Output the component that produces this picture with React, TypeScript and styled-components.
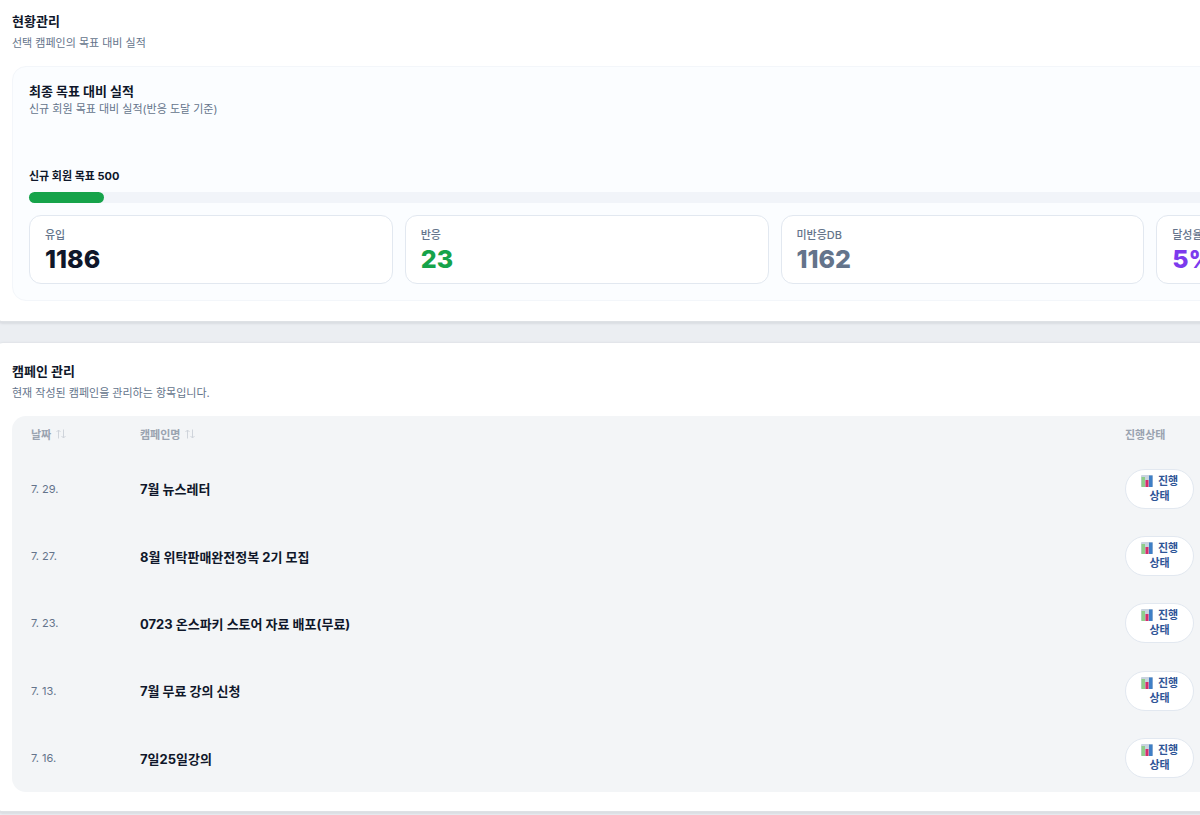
import React from "react";
import styled, { createGlobalStyle } from "styled-components";

const GlobalStyle = createGlobalStyle`
  * { box-sizing: border-box; }
  body {
    margin: 0;
    background: #ebeef2;
    color: #0f172a;
    font-family: Inter, "Noto Sans CJK KR", sans-serif;
    font-size: 12px;
    word-break: keep-all;
  }
  h1, h2, h3, p, dl, dt, dd { margin: 0; }
`;

const Viewport = styled.main`
  overflow: hidden;
  min-height: 100vh;
`;

const Board = styled.div`
  display: flex;
  flex-direction: column;
  gap: 22px;
  margin: 0 -354px 0 -5px;
`;

const Section = styled.section<{ $first?: boolean }>`
  padding: ${(p) => (p.$first ? "11px 17px 20px" : "18px 17px 19px")};
  background: #fff;
  border-radius: ${(p) => (p.$first ? "0 0 8px 8px" : "8px")};
  box-shadow: 0 0 2px 1px #e0e3e7, 0 2px 2px 1px #d9dce1;
`;

const SectionTitle = styled.h2`
  font-size: 13px;
  line-height: 20px;
  font-weight: 700;
`;

const Description = styled.p`
  margin-top: 2px;
  font-size: 11px;
  line-height: 20px;
  color: #64748b;
`;

const Panel = styled.div`
  margin-top: 13px;
  padding: 15px 16px 16px;
  background: #fbfdff;
  border: 1px solid #f3f6fa;
  border-radius: 14px;
`;

const PanelTitle = styled.h3`
  font-size: 13px;
  line-height: 18px;
  font-weight: 700;
`;

const PanelText = styled.p`
  font-size: 11px;
  line-height: 18px;
  color: #64748b;
`;

const GoalLabel = styled.p`
  margin-top: 48px;
  font-size: 11px;
  line-height: 20px;
  font-weight: 700;
`;

const Track = styled.div`
  height: 11px;
  margin: 6px 0 12px;
  border-radius: 6px;
  background: #f1f4f9;
`;

const Fill = styled.div`
  height: 100%;
  border-radius: 6px;
  background: #16a34a;
`;

const Stats = styled.dl`
  display: grid;
  grid-template-columns: repeat(4, 1fr);
  gap: 12px;
`;

const Stat = styled.div`
  padding: 9px 15px 10px;
  background: #fff;
  border: 1px solid #e2e8f0;
  border-radius: 12px;
`;

const StatLabel = styled.dt`
  font-size: 11px;
  line-height: 20px;
  font-weight: 500;
  color: #64748b;
`;

const StatValue = styled.dd<{ $color: string }>`
  font-size: 25px;
  line-height: 28px;
  font-weight: 800;
  color: ${(p) => p.$color};
`;

const TableBox = styled.div`
  margin-top: 13px;
  padding-left: 19px;
  background: #f3f5f7;
  border-radius: 14px;
`;

const Table = styled.table`
  width: 100%;
  height: 376px;
  table-layout: fixed;
  border-collapse: collapse;
`;

const HeadCell = styled.th<{ $width?: number }>`
  width: ${(p) => (p.$width ? `${p.$width}px` : "auto")};
  height: 39px;
  padding: 0 0 3px;
  text-align: left;
  font-size: 11px;
  font-weight: 700;
  color: #9aa3b0;
`;

const SortButton = styled.button`
  display: flex;
  align-items: center;
  gap: 5px;
  padding: 0;
  border: 0;
  background: none;
  font: inherit;
  color: inherit;
`;

const DateCell = styled.td`
  padding: 0;
  font-size: 11px;
  color: #64748b;
`;

const NameCell = styled.td`
  padding: 0;
  font-size: 13px;
  font-weight: 700;
`;

const StatusCell = styled.td`
  padding: 0;
`;

const StatusButton = styled.button`
  display: block;
  width: 69px;
  padding: 4px 12px;
  border: 1px solid #e2e8f0;
  border-radius: 20px;
  background: #fff;
  font-family: inherit;
  font-size: 11px;
  line-height: 15px;
  font-weight: 700;
  color: #2f5597;
`;

const ChartSvg = styled.svg`
  margin-right: 5px;
  vertical-align: -2px;
`;

const SortIcon = () => (
  <svg width="10" height="10" viewBox="0 0 10 10" fill="none" stroke="#cfd4db" aria-hidden="true">
    <path d="M2.5 9.5V1M.5 3l2-2 2 2M7.5.5V9M5.5 7l2 2 2-2" />
  </svg>
);

const ChartIcon = () => (
  <ChartSvg width="12" height="12" viewBox="0 0 12 12" aria-hidden="true">
    <rect width="12" height="12" rx="1" fill="#c9d3df" />
    <rect x="0.5" y="2" width="3.5" height="10" fill="#8fce8a" />
    <rect x="4.5" y="5" width="3" height="7" fill="#d62d6b" />
    <rect x="8" y="0.5" width="3.5" height="11.5" fill="#3f7fc6" />
  </ChartSvg>
);

const stats = [
  { label: "유입", value: "1186", color: "#0f172a" },
  { label: "반응", value: "23", color: "#16a34a" },
  { label: "미반응DB", value: "1162", color: "#64748b" },
  { label: "달성율", value: "5%", color: "#7c3aed" },
];

const campaigns = [
  { date: "7. 29.", name: "7월 뉴스레터" },
  { date: "7. 27.", name: "8월 위탁판매완전정복 2기 모집" },
  { date: "7. 23.", name: "0723 온스파키 스토어 자료 배포(무료)" },
  { date: "7. 13.", name: "7월 무료 강의 신청" },
  { date: "7. 16.", name: "7일25일강의" },
];

const progress = 5;

export default function App() {
  return (
    <Viewport>
      <GlobalStyle />
      <Board>
        <Section $first>
          <SectionTitle>현황관리</SectionTitle>
          <Description>선택 캠페인의 목표 대비 실적</Description>
          <Panel>
            <PanelTitle>최종 목표 대비 실적</PanelTitle>
            <PanelText>신규 회원 목표 대비 실적(반응 도달 기준)</PanelText>
            <GoalLabel id="goal">신규 회원 목표 500</GoalLabel>
            <Track role="progressbar" aria-labelledby="goal" aria-valuenow={progress}>
              <Fill style={{ width: `${progress}%` }} />
            </Track>
            <Stats>
              {stats.map((s) => (
                <Stat key={s.label}>
                  <StatLabel>{s.label}</StatLabel>
                  <StatValue $color={s.color}>{s.value}</StatValue>
                </Stat>
              ))}
            </Stats>
          </Panel>
        </Section>
        <Section>
          <SectionTitle>캠페인 관리</SectionTitle>
          <Description>현재 작성된 캠페인을 관리하는 항목입니다.</Description>
          <TableBox>
            <Table>
              <thead>
                <tr>
                  <HeadCell $width={109}>
                    <SortButton type="button">날짜 <SortIcon /></SortButton>
                  </HeadCell>
                  <HeadCell>
                    <SortButton type="button">캠페인명 <SortIcon /></SortButton>
                  </HeadCell>
                  <HeadCell $width={412}>진행상태</HeadCell>
                </tr>
              </thead>
              <tbody>
                {campaigns.map((c) => (
                  <tr key={c.date}>
                    <DateCell>{c.date}</DateCell>
                    <NameCell>{c.name}</NameCell>
                    <StatusCell>
                      <StatusButton type="button"><ChartIcon />진행 상태</StatusButton>
                    </StatusCell>
                  </tr>
                ))}
              </tbody>
            </Table>
          </TableBox>
        </Section>
      </Board>
    </Viewport>
  );
}
